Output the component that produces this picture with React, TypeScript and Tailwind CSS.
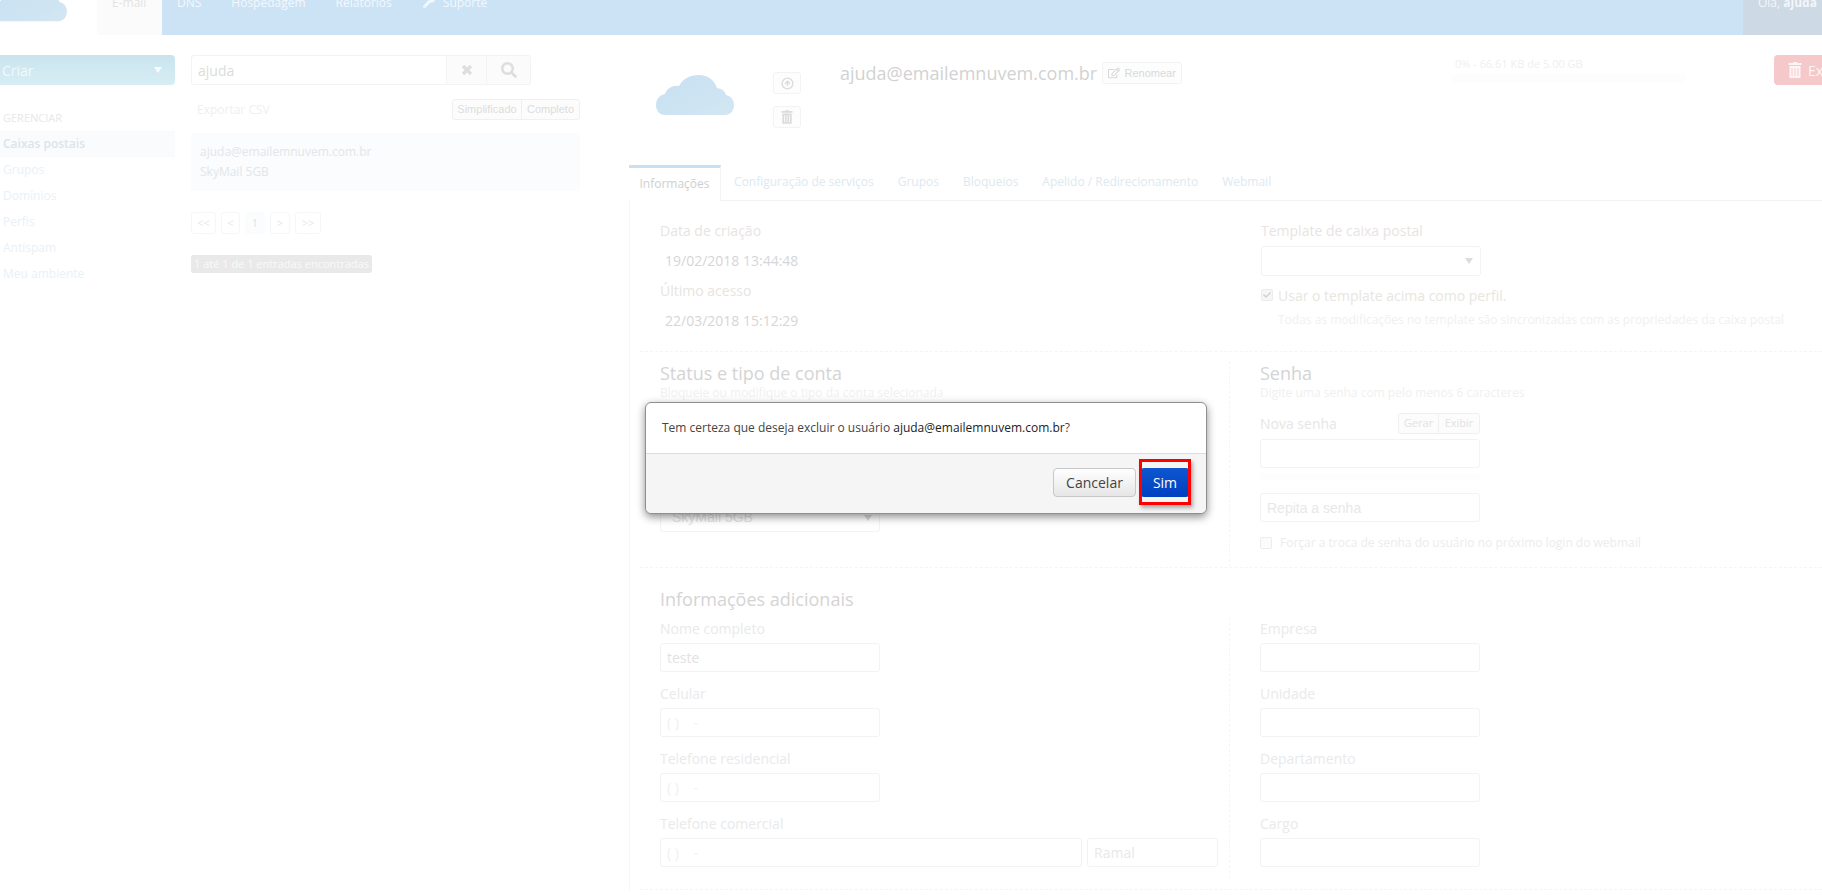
import { FaCheck, FaRegEdit, FaSearch, FaWrench } from "react-icons/fa";
import { CircleArrowUp } from "lucide-react";

const sans = "font-['Open_Sans',sans-serif]";
const arial = "font-['Liberation_Sans',Arial,sans-serif]";

const navItems = [
  { label: "DNS", className: "ml-[15px]" },
  { label: "Hospedagem", className: "ml-[30px]" },
  { label: "Relatórios", className: "ml-[30px]" },
];

const sideLinks = ["Grupos", "Domínios", "Perfis", "Antispam", "Meu ambiente"];

const tabs = [
  { label: "Configuração de serviços", className: "ml-[13px]" },
  { label: "Grupos", className: "ml-[24px]" },
  { label: "Bloqueios", className: "ml-[24px]" },
  { label: "Apelido / Redirecionamento", className: "ml-[24px]" },
  { label: "Webmail", className: "ml-[24px]" },
];

function Cloud({ className }: { className: string }) {
  return (
    <svg viewBox="0 0 78 40" className={className}>
      <defs>
        <linearGradient id="cloudFill" x1="0" y1="0" x2="1" y2="1">
          <stop offset="0" stopColor="#c6e0f3" />
          <stop offset="1" stopColor="#d3e6f2" />
        </linearGradient>
      </defs>
      <path
        d="M9 40C3 40 0 35 0 30C0 24 4 20 9 19C11 13 17 10 23 11C27 4 33 0 43 0C52 0 58 5 61 13C66 14 69 16 70 20C75 21 78 25 78 30C78 36 74 40 69 40Z"
        fill="url(#cloudFill)"
      />
    </svg>
  );
}

function Trash({ className }: { className: string }) {
  return (
    <svg viewBox="0 0 14 16" fill="currentColor" className={className}>
      <path d="M5 0h4v1h4.5v2H.5V1H5zM1.5 4h11v12h-11zM3.5 6v8h1V6zM6.5 6v8h1V6zM9.5 6v8h1V6z" fillRule="evenodd" />
    </svg>
  );
}

function Cross({ className }: { className: string }) {
  return (
    <svg viewBox="0 0 12 12" stroke="currentColor" strokeWidth="3.2" className={className}>
      <path d="M2 2l8 8M10 2l-8 8" />
    </svg>
  );
}

function Caret({ className }: { className: string }) {
  return <span className={`border-x-[4px] border-t-[6px] border-x-transparent ${className}`} />;
}

function TextBox({ value, placeholder, className = "w-[220px]" }: { value?: string; placeholder?: string; className?: string }) {
  return (
    <input
      readOnly
      value={value ?? ""}
      placeholder={placeholder}
      className={`h-[29px] rounded-[3px] border border-[#f3f3f3] bg-white px-[6px] text-[14px] outline-none placeholder:text-[#e8e8e8] ${className}`}
    />
  );
}

function Field({ label, value, wide }: { label: string; value?: string; wide?: boolean }) {
  const tone = value === "teste" ? "text-[#e2e2e2]" : "text-[#f0f0f0]";
  return (
    <div>
      <div className="flex h-[20px] items-center text-[14px] text-[#e8eaec]">{label}</div>
      {wide ? (
        <div className="mt-[5px] flex gap-[5px]">
          <TextBox value={value} className={`w-[422px] ${tone}`} />
          <TextBox placeholder="Ramal" className="w-[131px]" />
        </div>
      ) : (
        <TextBox value={value} className={`mt-[5px] w-[220px] ${tone}`} />
      )}
    </div>
  );
}

export default function App() {
  return (
    <div className={`relative h-[895px] w-[1822px] overflow-hidden bg-white ${sans}`}>
      <header className="flex h-[35px] overflow-hidden bg-[#cce3f6] text-[12px] text-[#f3f8fc]">
        <div className="relative h-full w-[97px] bg-white">
          <Cloud className="absolute left-[-8px] top-[-18px] h-[40px] w-[75px]" />
        </div>
        <div className="h-full w-[65px] bg-[#fbfbfb] pl-[15px] leading-[6px] text-[#e4e4e4]">E-mail</div>
        {navItems.map((item) => (
          <span key={item.label} className={`leading-[6px] ${item.className}`}>
            {item.label}
          </span>
        ))}
        <FaWrench className="ml-[31px] mt-[-4px] h-[12px] w-[12px]" />
        <span className="ml-[8px] leading-[6px]">Suporte</span>
        <div className="ml-auto h-full w-[79px] bg-[#cdd9e4] pl-[15px] leading-[6px] text-[#f3f6f9]">
          Olá, <b>ajuda</b>
        </div>
      </header>

      <main className="flex pt-[20px]">
        {/* sidebar */}
        <aside className="w-[175px] shrink-0">
          <div className="flex h-[30px] items-center justify-between rounded-r-[4px] bg-gradient-to-b from-[#c9e4ef] to-[#d8edf4] pl-[2px] pr-[13px] text-[14px] text-[#f2f9fb]">
            Criar
            <Caret className="border-t-[#f7fbfd]" />
          </div>
          <div className="ml-[3px] mt-[23px] flex h-[20px] items-center text-[11px] text-[#e8e8e8]">GERENCIAR</div>
          <div className="mt-[3px] flex h-[26px] items-center bg-[#fafbfd] pl-[3px] text-[12px] font-semibold text-[#dae4ec]">
            Caixas postais
          </div>
          {sideLinks.map((link) => (
            <div key={link} className="flex h-[26px] items-center pl-[3px] text-[12px] text-[#e8f1f7]">
              {link}
            </div>
          ))}
        </aside>

        {/* mailbox list */}
        <section className="ml-[16px] w-[389px] shrink-0">
          <div className="flex h-[30px] w-[340px]">
            <div className="flex w-[256px] items-center rounded-l-[3px] border border-[#f3f3f3] pl-[6px] text-[14px] text-[#dcdcdc]">ajuda</div>
            <div className="flex w-[39px] items-center justify-center border-y border-[#f3f3f3] bg-[#fbfbfb] text-[#dedede]">
              <Cross className="h-[12px] w-[12px]" />
            </div>
            <div className="flex w-[45px] items-center justify-center rounded-r-[3px] border border-[#f3f3f3] bg-[#fbfbfb] text-[#dedede]">
              <FaSearch className="h-[16px] w-[16px]" />
            </div>
          </div>
          <div className="mt-[14px] flex h-[21px] items-center justify-between">
            <span className="pl-[6px] text-[12px] text-[#efefef]">Exportar CSV</span>
            <div className={`flex h-[21px] rounded-[3px] border border-[#f0f0f0] bg-[#fcfcfc] text-[11px] text-[#dcdcdc] ${arial}`}>
              <span className="flex w-[69px] items-center justify-center border-r border-[#f0f0f0]">Simplificado</span>
              <span className="flex w-[57px] items-center justify-center">Completo</span>
            </div>
          </div>
          <div className="mt-[13px] h-[58px] bg-[#fafcfd] px-[9px] py-[9px] text-[12px] leading-[20px] text-[#e2e6ea]">
            <div>ajuda@emailemnuvem.com.br</div>
            <div>SkyMail 5GB</div>
          </div>
          <div className="mt-[21px] flex h-[22px] gap-[5px] text-[11px] text-[#e8e8e8]">
            <span className="flex w-[25px] items-center justify-center rounded-[3px] border border-[#f6f6f6]">&lt;&lt;</span>
            <span className="flex w-[19px] items-center justify-center rounded-[3px] border border-[#f6f6f6]">&lt;</span>
            <span className="flex w-[20px] items-center justify-center rounded-[3px] bg-[#fafcfd] text-[#dfe3e6]">1</span>
            <span className="flex w-[20px] items-center justify-center rounded-[3px] border border-[#f6f6f6]">&gt;</span>
            <span className="flex w-[26px] items-center justify-center rounded-[3px] border border-[#f6f6f6]">&gt;&gt;</span>
          </div>
          <div className="mt-[21px] flex h-[18px] w-[181px] items-center justify-center rounded-[2px] bg-[#e9e9e9] text-[11px] whitespace-nowrap text-[#fafafa]">
            1 até 1 de 1 entradas encontradas
          </div>
        </section>

        {/* mailbox detail */}
        <section className="ml-[49px] w-[1193px] shrink-0">
          <div className="flex h-[110px] pl-[27px]">
            <Cloud className="mt-[20px] h-[40px] w-[78px] shrink-0" />
            <div className="ml-[39px] mt-[17px] flex w-[28px] shrink-0 flex-col gap-[12px] text-[#dcdcdc]">
              <div className="flex h-[22px] items-center justify-center rounded-[3px] border border-[#f3f3f3] bg-[#fdfdfd]">
                <CircleArrowUp className="h-[13px] w-[13px]" strokeWidth={2.5} />
              </div>
              <div className="flex h-[22px] items-center justify-center rounded-[3px] border border-[#f3f3f3] bg-[#fdfdfd]">
                <Trash className="h-[14px] w-[12px]" />
              </div>
            </div>
            <div className="ml-[39px] flex h-[32px] w-[611px] shrink-0 items-center pt-[4px]">
              <span className="text-[18px] text-[#d2d2d2]">ajuda@emailemnuvem.com.br</span>
              <span className={`ml-[5px] flex h-[22px] w-[80px] items-center justify-center gap-[4px] rounded-[3px] border border-[#f3f3f3] bg-[#fdfdfd] text-[11px] text-[#d9d9d9] ${arial}`}>
                <FaRegEdit className="h-[12px] w-[12px]" />
                Renomear
              </span>
            </div>
            <div className="w-[235px] shrink-0">
              <div className="mt-[1px] flex h-[16px] items-center pl-[4px] text-[11px] text-[#efefef]">0% - 66.61 KB de 5.00 GB</div>
              <div className="mt-[2px] h-[9px] rounded-[3px] bg-[#fdfdfd]" />
            </div>
            <div className="ml-[88px] flex h-[30px] w-[100px] shrink-0 items-center rounded-[4px] bg-[#f5c9c9] pl-[14px] text-[14px] text-[#fdf5f5]">
              <Trash className="h-[16px] w-[14px]" />
              <span className="ml-[6px]">Excluir</span>
            </div>
          </div>

          {/* tabs */}
          <div className="flex h-[36px] items-center border-b border-[#f3f3f3] text-[12px] text-[#dce9f1]">
            <div className="flex h-[36px] w-[92px] items-center justify-center border-t-[3px] border-r border-[#f3f3f3] border-t-[#c7e0f4] bg-white text-[#cfcfcf]">
              Informações
            </div>
            {tabs.map((tab) => (
              <span key={tab.label} className={`pb-[1px] ${tab.className}`}>
                {tab.label}
              </span>
            ))}
          </div>

          <div className="border-l border-[#f6f6f6]">
            {/* info section */}
            <div className="ml-[10px] flex h-[151px] border-b border-dashed border-[#f5f5f5] pl-[20px] pt-[14px] text-[14px]">
              <div className="w-[601px] shrink-0">
                <div className="flex h-[30px] items-center text-[#e8e4e2]">Data de criação</div>
                <div className="flex h-[30px] items-center pl-[5px] text-[#d6d6d6]">19/02/2018 13:44:48</div>
                <div className="flex h-[30px] items-center text-[#e8e4e2]">Último acesso</div>
                <div className="flex h-[30px] items-center pl-[5px] text-[#d6d6d6]">22/03/2018 15:12:29</div>
              </div>
              <div>
                <div className="flex h-[30px] items-center text-[#e8e4e2]">Template de caixa postal</div>
                <div className="mt-[1px] flex h-[30px] w-[220px] items-center justify-end rounded-[3px] border border-[#f3f3f3] pr-[7px]">
                  <Caret className="border-t-[#dcdcdc]" />
                </div>
                <div className="mt-[9px] flex h-[20px] items-center text-[#e8e6e0]">
                  <span className="flex h-[12px] w-[12px] items-center justify-center rounded-[2px] border border-[#ececec] bg-[#f6f6f6] text-[#d2d2d2]">
                    <FaCheck className="h-[8px] w-[8px]" />
                  </span>
                  <span className="ml-[5px]">Usar o template acima como perfil.</span>
                </div>
                <div className="ml-[17px] mt-[5px] flex h-[20px] items-center text-[12px] whitespace-nowrap text-[#f0f0f0]">
                  Todas as modificações no template são sincronizadas com as propriedades da caixa postal
                </div>
              </div>
            </div>

            {/* status and password */}
            <div className="ml-[10px] flex h-[216px] border-b border-dashed border-[#f5f5f5] pl-[20px] pt-[9px]">
              <div className="w-[570px] shrink-0 border-r border-dashed border-[#f5f5f5] pr-[10px]">
                <div className="flex h-[24px] items-center text-[18px] text-[#d4d4d4]">Status e tipo de conta</div>
                <div className="flex h-[16px] items-center text-[12px] text-[#f0f0f0]">Bloqueie ou modifique o tipo da conta selecionada</div>
                <div className={`mt-[102px] flex h-[29px] w-[220px] items-center justify-between rounded-[3px] border border-[#f3f3f3] pl-[11px] pr-[7px] text-[14px] text-[#e4e4e4] ${arial}`}>
                  SkyMail 5GB
                  <Caret className="border-t-[#dcdcdc]" />
                </div>
              </div>
              <div className="pl-[30px]">
                <div className="flex h-[24px] items-center text-[18px] text-[#d4d4d4]">Senha</div>
                <div className="flex h-[16px] items-center text-[12px] text-[#f0f0f0]">Digite uma senha com pelo menos 6 caracteres</div>
                <div className="mt-[12px] flex h-[21px] w-[220px] items-center justify-between text-[14px] text-[#e6e6e6]">
                  Nova senha
                  <div className="flex h-[21px] w-[82px] rounded-[3px] border border-[#f0f0f0] bg-[#fcfcfc] text-[11px] text-[#e2e2e2]">
                    <span className="flex w-[41px] items-center justify-center border-r border-[#f0f0f0]">Gerar</span>
                    <span className="flex w-[41px] items-center justify-center">Exibir</span>
                  </div>
                </div>
                <TextBox className="mt-[5px] block w-[220px]" />
                <div className="mt-[5px] h-[7px] w-[220px] rounded-[3px] bg-[#fdfdfd]" />
                <TextBox placeholder="Repita a senha" className={`mt-[13px] block w-[220px] ${arial}`} />
                <div className="mt-[11px] flex h-[20px] items-center text-[12px] whitespace-nowrap text-[#ececec]">
                  <span className="h-[12px] w-[12px] rounded-[2px] border border-[#ececec] bg-[#fbfbfb]" />
                  <span className="ml-[8px]">Forçar a troca de senha do usuário no próximo login do webmail</span>
                </div>
              </div>
            </div>

            {/* additional info */}
            <div className="ml-[10px] flex h-[322px] border-b border-dashed border-[#f5f5f5] pl-[20px] pt-[19px]">
              <div className="w-[570px] shrink-0">
                <div className="flex h-[24px] items-center text-[18px] text-[#d4d4d4]">Informações adicionais</div>
                <div className="mt-[7px] flex h-[260px] flex-col gap-[11px] border-r border-dashed border-[#f5f5f5]">
                  <Field label="Nome completo" value="teste" />
                  <Field label="Celular" value="( )    -" />
                  <Field label="Telefone residencial" value="( )    -" />
                  <Field label="Telefone comercial" value="( )    -" wide />
                </div>
              </div>
              <div className="flex flex-col gap-[11px] pl-[30px] pt-[31px]">
                <Field label="Empresa" />
                <Field label="Unidade" />
                <Field label="Departamento" />
                <Field label="Cargo" />
              </div>
            </div>
          </div>
        </section>
      </main>

      {/* confirm dialog */}
      <div className="absolute left-[645px] top-[402px] w-[562px] overflow-visible rounded-[6px] border border-[#8f8f8f] bg-white shadow-[0_3px_9px_rgba(0,0,0,0.45)]">
        <div className="flex h-[51px] items-center border-b border-[#dcdcdc] pl-[16px] text-[12px] text-[#444]">
          Tem certeza que deseja excluir o usuário&nbsp;<span className="text-[#222]">ajuda@emailemnuvem.com.br</span>?
        </div>
        <div className="flex h-[59px] items-start justify-end gap-[5px] rounded-b-[6px] bg-[#f5f5f5] pr-[17px] pt-[14px]">
          <button className="h-[29px] w-[83px] rounded-[4px] border border-[#c8c8c8] bg-gradient-to-b from-white to-[#e6e6e6] text-[14px] text-[#444]">
            Cancelar
          </button>
          <button className="relative h-[29px] w-[48px] rounded-[3px] bg-gradient-to-b from-[#0f56d0] to-[#0040c0] text-[14px] text-white">
            Sim
            <span className="absolute bottom-[-8px] left-[-2px] right-[-2px] top-[-9px] border-[3px] border-[#ff0000] shadow-[2px_3px_4px_rgba(0,0,0,0.3)]" />
          </button>
        </div>
      </div>
    </div>
  );
}
